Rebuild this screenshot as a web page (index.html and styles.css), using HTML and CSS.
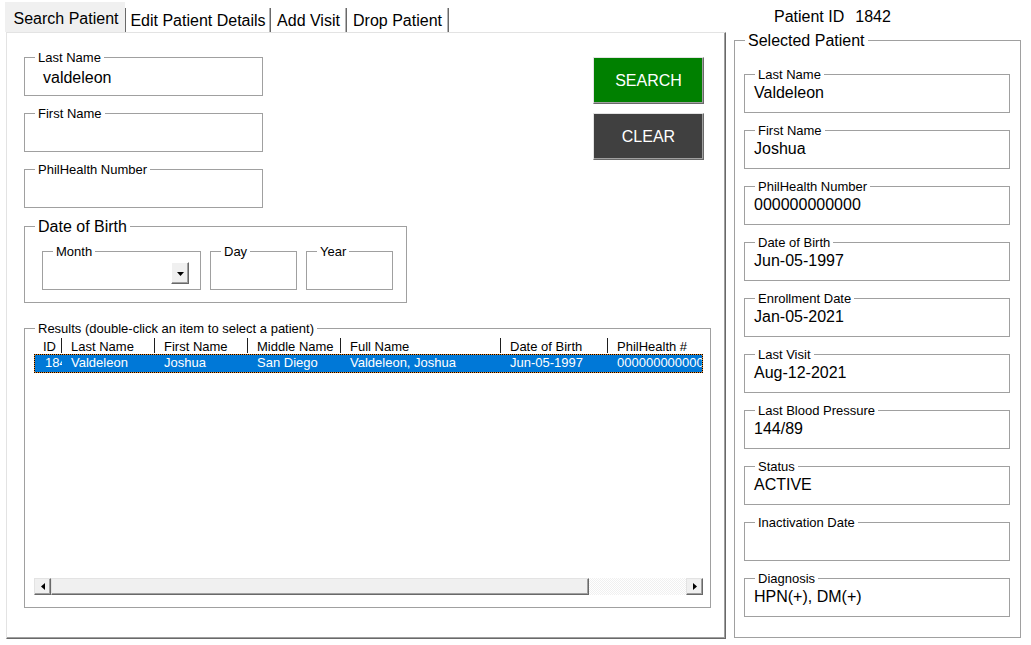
FILE: index.html
```html
<!DOCTYPE html>
<html>
<head>
<meta charset="utf-8">
<title>Search Patient</title>
<link rel="stylesheet" href="styles.css">
</head>
<body>
<div class="app">
  <div class="left">
    <div class="tabs">
      <div class="tab active">Search Patient</div>
      <div class="tab t-edit">Edit Patient Details</div>
      <div class="tab t-visit">Add Visit</div>
      <div class="tab t-drop">Drop Patient</div>
    </div>
    <div class="panel">
      <div class="top">
        <div class="form">
          <fieldset class="field sfield"><legend>Last Name</legend><div class="val">valdeleon</div></fieldset>
          <fieldset class="field sfield"><legend>First Name</legend><div class="val"></div></fieldset>
          <fieldset class="field sfield"><legend>PhilHealth Number</legend><div class="val"></div></fieldset>
          <fieldset class="dob"><legend>Date of Birth</legend>
            <div class="dob-row">
              <fieldset class="field month"><legend>Month</legend>
                <div class="combo"><span class="drop-btn"><svg width="7" height="4" viewBox="0 0 7 4"><path d="M0 0h7l-3.5 4z" fill="#000"/></svg></span></div>
              </fieldset>
              <fieldset class="field small"><legend>Day</legend><div class="val"></div></fieldset>
              <fieldset class="field small"><legend>Year</legend><div class="val"></div></fieldset>
            </div>
          </fieldset>
        </div>
        <div class="buttons">
          <button class="btn search">SEARCH</button>
          <button class="btn clear">CLEAR</button>
        </div>
      </div>
      <fieldset class="results"><legend>Results (double-click an item to select a patient)</legend>
        <div class="list">
          <div class="lhead">
            <div class="c c-id">ID</div>
            <div class="c c-ln">Last Name</div>
            <div class="c c-fn">First Name</div>
            <div class="c c-mn">Middle Name</div>
            <div class="c c-full">Full Name</div>
            <div class="c c-dob">Date of Birth</div>
            <div class="c c-ph">PhilHealth #</div>
          </div>
          <div class="lrow sel">
            <div class="c c-id">1842</div>
            <div class="c c-ln">Valdeleon</div>
            <div class="c c-fn">Joshua</div>
            <div class="c c-mn">San Diego</div>
            <div class="c c-full">Valdeleon, Joshua</div>
            <div class="c c-dob">Jun-05-1997</div>
            <div class="c c-ph">000000000000</div>
          </div>
          <div class="lspace"></div>
          <div class="hscroll">
            <div class="sbtn"><svg width="4" height="7" viewBox="0 0 4 7"><path d="M4 0v7L0 3.5z" fill="#000"/></svg></div>
            <div class="thumb"></div>
            <div class="track"></div>
            <div class="sbtn"><svg width="4" height="7" viewBox="0 0 4 7"><path d="M0 0v7l4-3.5z" fill="#000"/></svg></div>
          </div>
        </div>
      </fieldset>
    </div>
  </div>
  <div class="right">
    <div class="pid">Patient ID<span class="pid-num">1842</span></div>
    <fieldset class="selected"><legend>Selected Patient</legend>
      <div class="sp-list">
        <fieldset class="field pfield"><legend>Last Name</legend><div class="val">Valdeleon</div></fieldset>
        <fieldset class="field pfield"><legend>First Name</legend><div class="val">Joshua</div></fieldset>
        <fieldset class="field pfield"><legend>PhilHealth Number</legend><div class="val">000000000000</div></fieldset>
        <fieldset class="field pfield"><legend>Date of Birth</legend><div class="val">Jun-05-1997</div></fieldset>
        <fieldset class="field pfield"><legend>Enrollment Date</legend><div class="val">Jan-05-2021</div></fieldset>
        <fieldset class="field pfield"><legend>Last Visit</legend><div class="val">Aug-12-2021</div></fieldset>
        <fieldset class="field pfield"><legend>Last Blood Pressure</legend><div class="val">144/89</div></fieldset>
        <fieldset class="field pfield"><legend>Status</legend><div class="val">ACTIVE</div></fieldset>
        <fieldset class="field pfield"><legend>Inactivation Date</legend><div class="val"></div></fieldset>
        <fieldset class="field pfield"><legend>Diagnosis</legend><div class="val">HPN(+), DM(+)</div></fieldset>
      </div>
    </fieldset>
  </div>
</div>
</body>
</html>
```

FILE: styles.css
```css
html, body {
  margin: 0;
  padding: 0;
  background: #fff;
}
body {
  font-family: "Liberation Sans", Arial, sans-serif;
  color: #000;
}
.app {
  display: flex;
  width: 1031px;
  height: 645px;
}
.left {
  width: 726px;
  flex: none;
}

/* tabs */
.tabs {
  display: flex;
  align-items: flex-end;
  height: 32px;
  padding-left: 5px;
  box-sizing: border-box;
}
.tab {
  font-size: 16px;
  line-height: 18px;
  height: 24px;
  padding-top: 4px;
  box-sizing: border-box;
  text-align: center;
  white-space: nowrap;
  border-right: 1px solid #696969;
  box-shadow: inset -1px 0 0 #b4b4b4;
}
.tab.active {
  width: 120px;
  height: 30px;
  padding-top: 8px;
  padding-left: 2px;
  background: #f0f0f0;
  border-right: none;
  box-shadow: none;
}
.t-edit {
  width: 146px;
  border-left: 1px solid #696969;
}
.t-visit { width: 76px; }
.t-drop { width: 102px; }

/* panel */
.panel {
  margin-left: 6px;
  width: 720px;
  height: 607px;
  box-sizing: border-box;
  border-left: 1px solid #e3e3e3;
  border-top: 1px solid #e3e3e3;
  border-right: 1px solid #696969;
  border-bottom: 1px solid #696969;
  box-shadow: inset -1px -1px 0 #a0a0a0;
  padding: 17px 0 0 17px;
}
.top {
  display: flex;
}
.form {
  width: 383px;
  display: flex;
  flex-direction: column;
}
.form > .field + .field {
  margin-top: 10px;
}

/* fieldsets */
fieldset {
  margin: 0;
  padding: 0;
  border: 1px solid #a0a0a0;
  min-width: 0;
  box-sizing: border-box;
}
legend {
  padding: 1px 3px 0;
  margin-left: 10px;
  font-size: 13px;
  line-height: 14px;
  white-space: nowrap;
}
.val {
  font-size: 16px;
  line-height: 18px;
  height: 18px;
  white-space: nowrap;
}
.sfield {
  width: 239px;
}
.sfield .val {
  margin-top: 4px;
  padding-left: 18px;
  margin-bottom: 8px;
}
.dob {
  width: 383px;
  margin-top: 9px;
}
.dob > legend {
  font-size: 16px;
  line-height: 18px;
}
.dob-row {
  display: flex;
  gap: 9px;
  padding: 8px 13px 12px 17px;
}
.month {
  width: 159px;
}
.small {
  width: 87px;
}
.small .val {
  margin-top: 4px;
  margin-bottom: 8px;
}
.combo {
  display: flex;
  justify-content: flex-end;
  margin-top: 3px;
  padding-right: 11px;
  margin-bottom: 5px;
}
.drop-btn {
  width: 18px;
  height: 22px;
  box-sizing: border-box;
  background: #f0f0f0;
  border: 1px solid;
  border-color: #fff #696969 #696969 #fff;
  box-shadow: inset -1px -1px 0 #a0a0a0;
  display: flex;
  align-items: center;
  justify-content: center;
}
.drop-btn svg {
  display: block;
  margin-top: 1px;
}

/* buttons */
.buttons {
  margin-left: auto;
  margin-right: 21px;
  margin-top: 7px;
  display: flex;
  flex-direction: column;
  gap: 9px;
}
.btn {
  width: 111px;
  height: 47px;
  box-sizing: border-box;
  font-family: "Liberation Sans", Arial, sans-serif;
  font-size: 16px;
  color: #fff;
  padding: 0;
  border: 1px solid;
  border-color: #e3e3e3 #696969 #696969 #e3e3e3;
  box-shadow: inset -1px -1px 0 #a0a0a0;
}
.btn.search { background: #008000; }
.btn.clear { background: #404040; }

/* results */
.results {
  width: 687px;
  margin-top: 18px;
}
.list {
  margin: 2px 7px 12px 9px;
  height: 257px;
  display: flex;
  flex-direction: column;
}
.lhead, .lrow {
  display: flex;
  font-size: 13px;
  line-height: 15px;
  white-space: nowrap;
}
.lhead {
  height: 15px;
}
.lhead .c {
  border-right: 1px solid #1e1e1e;
  padding-top: 1px;
  height: 15px;
}
.c {
  box-sizing: border-box;
  overflow: hidden;
  padding-left: 9px;
  flex: none;
}
.c-id { width: 28px; }
.c-ln { width: 93px; }
.c-fn { width: 93px; }
.c-mn { width: 93px; }
.c-full { width: 160px; }
.c-dob { width: 107px; }
.c-ph { flex: 1 1 auto; width: 0; }
.lhead .c-ph { border-right: none; }
.lrow.sel {
  margin-top: 1px;
  height: 17px;
  color: #fff;
  border: 1px dotted #000;
  background: linear-gradient(#0078d7, #0078d7) padding-box, linear-gradient(#f08a24, #f08a24) border-box;
}
.lrow .c-id {
  width: 27px;
  padding-left: 10px;
}
.lrow .c-ph {
  padding-left: 9px;
}
.lspace {
  flex: 1;
}
.hscroll {
  display: flex;
  height: 17px;
}
.sbtn {
  width: 17px;
  height: 17px;
  box-sizing: border-box;
  background: #f0f0f0;
  border: 1px solid;
  border-color: #e3e3e3 #696969 #696969 #e3e3e3;
  box-shadow: inset -1px -1px 0 #a0a0a0;
  display: flex;
  align-items: center;
  justify-content: center;
}
.sbtn svg { display: block; }
.thumb {
  width: 538px;
  height: 17px;
  box-sizing: border-box;
  background: #f0f0f0;
  border: 1px solid;
  border-color: #e3e3e3 #696969 #696969 #e3e3e3;
  box-shadow: inset -1px -1px 0 #a0a0a0;
}
.track {
  flex: 1;
  background: repeating-conic-gradient(#f0f0f0 0 25%, #fff 0 50%) 0 0 / 2px 2px;
}

/* right column */
.right {
  margin-left: 8px;
  width: 287px;
  flex: none;
}
.pid {
  font-size: 16px;
  line-height: 18px;
  margin-top: 8px;
  padding-left: 40px;
  white-space: nowrap;
}
.pid-num {
  margin-left: 11px;
}
.selected {
  width: 287px;
  margin-top: 5px;
}
.selected > legend {
  font-size: 16px;
  line-height: 18px;
}
.sp-list {
  display: flex;
  flex-direction: column;
  gap: 10px;
  padding: 17px 10px 20px 9px;
}
.pfield {
  width: 266px;
}
.pfield .val {
  margin-top: 2px;
  padding-left: 9px;
  margin-bottom: 10px;
}
```
